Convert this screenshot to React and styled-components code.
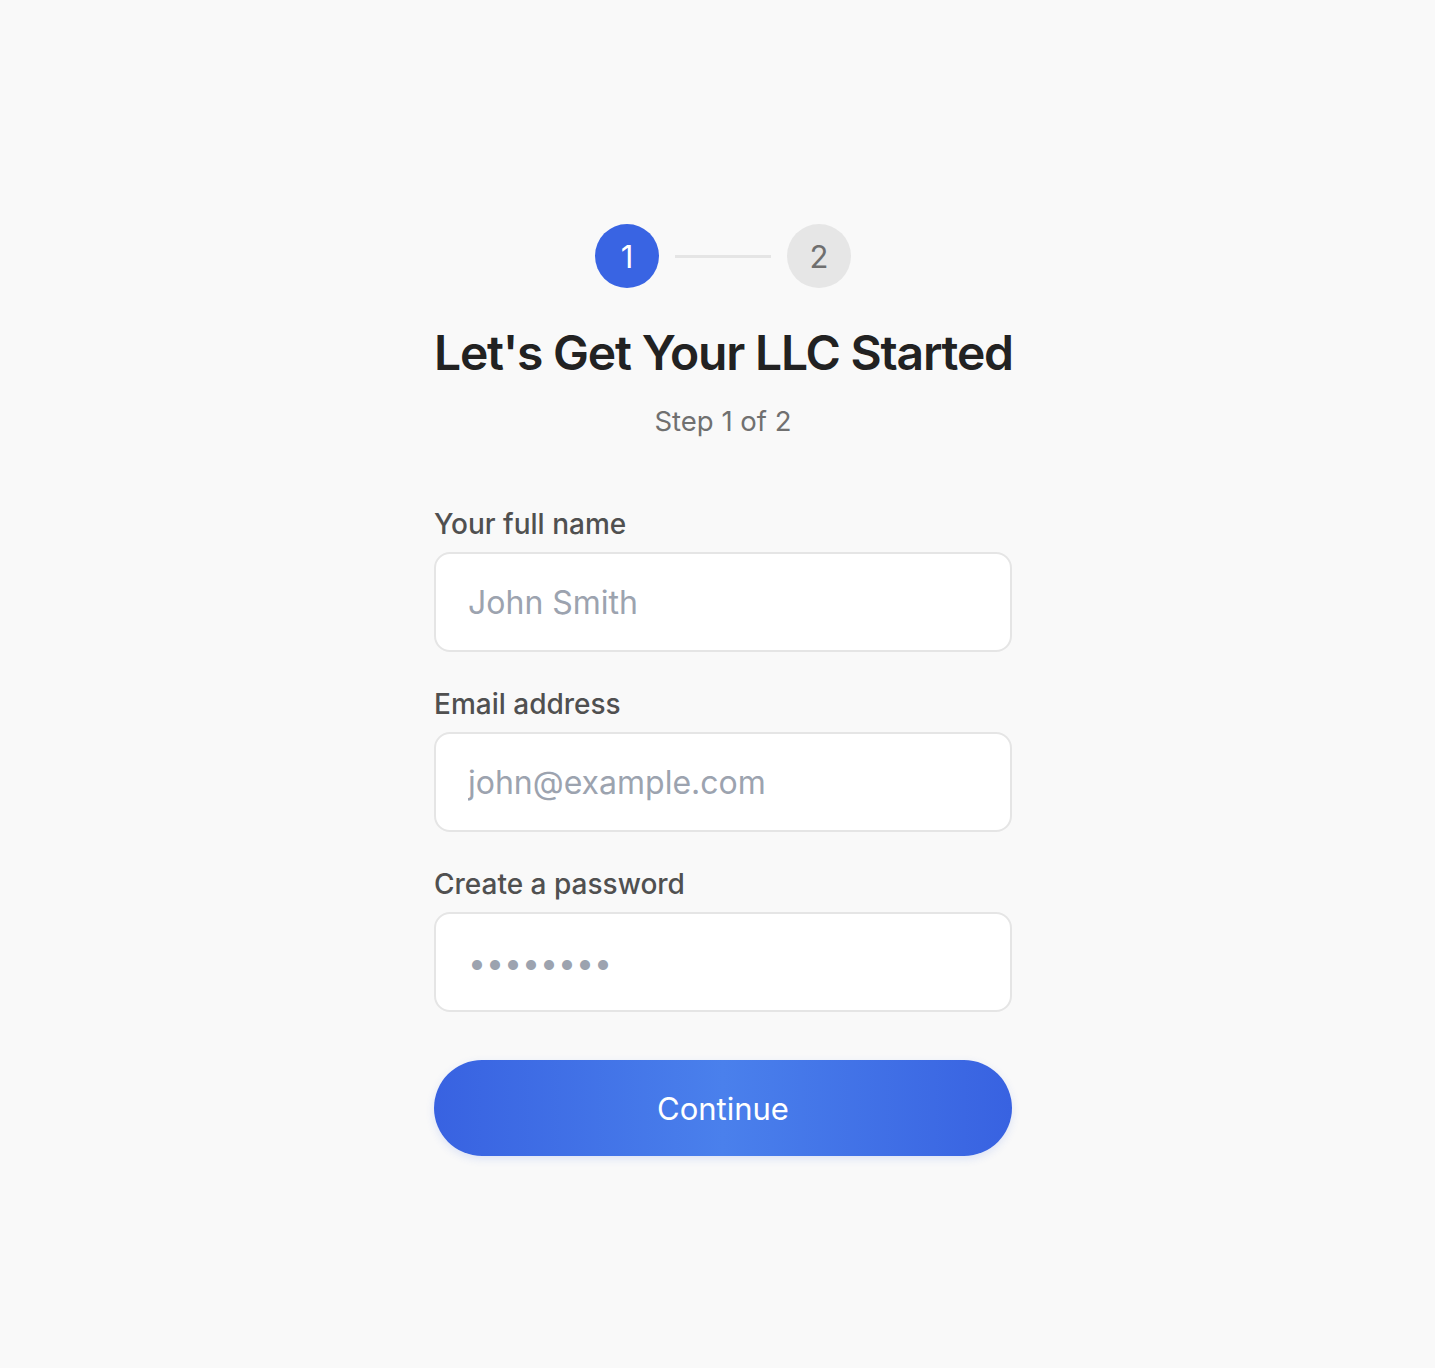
import React from 'react'
import styled, { createGlobalStyle } from 'styled-components'

const GlobalStyle = createGlobalStyle`
  html, body {
    margin: 0;
    padding: 0;
    background: #f9f9f9;
  }
  * {
    box-sizing: border-box;
  }
`

const Page = styled.main`
  min-height: 1368px;
  display: flex;
  justify-content: center;
  padding: 224px 0 0 11px;
  background: #f9f9f9;
`

const Wrapper = styled.div`
  width: 578px;
  display: flex;
  flex-direction: column;
`

const Stepper = styled.div`
  display: flex;
  align-items: center;
  justify-content: center;
  gap: 16px;
`

const StepCircle = styled.div`
  width: 64px;
  height: 64px;
  border-radius: 50%;
  display: flex;
  align-items: center;
  justify-content: center;
  font-family: Inter, "Liberation Sans", sans-serif;
  font-size: 31px;
  background: ${(p) => (p.$active ? '#3964e3' : '#e6e6e6')};
  color: ${(p) => (p.$active ? '#ffffff' : '#6f6f6f')};
`

const StepLine = styled.div`
  width: 96px;
  height: 3px;
  background: #e5e5e5;
`

const Title = styled.h1`
  margin: 36px 0 0;
  font-family: Inter, "Liberation Sans", sans-serif;
  font-size: 48px;
  line-height: 58px;
  font-weight: 600;
  letter-spacing: -1.2px;
  color: #222222;
  text-align: center;
  white-space: nowrap;
`

const Subtitle = styled.p`
  margin: 23px 0 0;
  font-family: Inter, "Liberation Sans", sans-serif;
  font-size: 27.5px;
  line-height: 32px;
  color: #707070;
  text-align: center;
`

const Form = styled.form`
  margin-top: 71px;
  display: flex;
  flex-direction: column;
  gap: 36px;
`

const Field = styled.div`
  display: flex;
  flex-direction: column;
  gap: 12px;
`

const Label = styled.label`
  font-family: Inter, "Noto Sans", sans-serif;
  font-size: 28px;
  line-height: 32px;
  font-weight: 500;
  color: #505050;
`

const Input = styled.input`
  width: 100%;
  height: 100px;
  padding: 0 32px;
  border: 2px solid #e5e5e5;
  border-radius: 16px;
  background: #ffffff;
  font-family: Inter, "Noto Sans", sans-serif;
  font-size: 32px;
  color: #222222;
  outline: none;

  &::placeholder {
    color: #9ca3af;
  }
`

const Button = styled.button`
  margin-top: 12px;
  height: 96px;
  width: 100%;
  border: none;
  border-radius: 48px;
  background: linear-gradient(90deg, #3862e1 0%, #4a80ec 50%, #3862e1 100%);
  box-shadow: 0 3px 8px rgba(57, 100, 227, 0.15);
  font-family: Inter, "Liberation Sans", sans-serif;
  font-size: 31px;
  color: #ffffff;
  cursor: pointer;
`

const App = () => {
  return (
    <>
      <GlobalStyle />
      <Page>
        <Wrapper>
          <Stepper>
            <StepCircle $active>1</StepCircle>
            <StepLine />
            <StepCircle>2</StepCircle>
          </Stepper>
          <Title>Let's Get Your LLC Started</Title>
          <Subtitle>Step 1 of 2</Subtitle>
          <Form onSubmit={(e) => e.preventDefault()}>
            <Field>
              <Label htmlFor="name">Your full name</Label>
              <Input id="name" type="text" placeholder="John Smith" />
            </Field>
            <Field>
              <Label htmlFor="email">Email address</Label>
              <Input id="email" type="email" placeholder="john@example.com" />
            </Field>
            <Field>
              <Label htmlFor="password">Create a password</Label>
              <Input id="password" type="password" placeholder="••••••••" />
            </Field>
            <Button type="submit">Continue</Button>
          </Form>
        </Wrapper>
      </Page>
    </>
  )
}

export default App
